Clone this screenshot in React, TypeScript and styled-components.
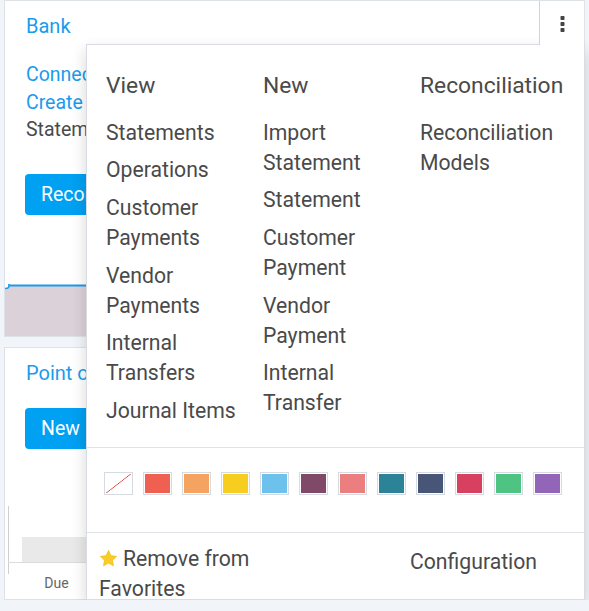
import React from "react";
import styled, { createGlobalStyle } from "styled-components";

const GlobalStyle = createGlobalStyle`
  html, body {
    margin: 0;
    padding: 0;
    background: #f1f4f8;
  }
  body {
    font-family: Roboto, "Liberation Sans", sans-serif;
  }
`;

const Page = styled.div`
  padding: 0 4px;
  display: flex;
  flex-direction: column;
  gap: 10px;
`;

const Card = styled.section<{ $h: number }>`
  position: relative;
  height: ${(p) => p.$h}px;
  box-sizing: border-box;
  background: #fff;
  border: 1px solid #dde2e7;
  display: flex;
  flex-direction: column;
`;

const CardHeader = styled.header`
  display: flex;
  justify-content: space-between;
  align-items: flex-start;
  height: 51px;
  padding-left: 21px;
`;

const Title = styled.h2`
  margin: 0;
  padding-top: 13px;
  font-size: 20px;
  font-weight: 400;
  line-height: 24px;
  color: #1a9bec;
  white-space: nowrap;
`;

const Toggle = styled.button`
  position: relative;
  z-index: 11;
  width: 45px;
  height: 44px;
  box-sizing: border-box;
  padding: 2px 0 0;
  border: 0;
  border-left: 1px solid #cfd4da;
  background: #fff;
  display: flex;
  align-items: center;
  justify-content: center;
`;

const CardBody = styled.div`
  padding: 9px 21px 0;
  display: flex;
  flex-direction: column;
  align-items: flex-start;
`;

const Link = styled.a<{ $muted?: boolean }>`
  font-size: 19.5px;
  line-height: 27.5px;
  white-space: nowrap;
  color: ${(p) => (p.$muted ? "#4a4a4a" : "#1a9bec")};
  text-decoration: none;
`;

const PrimaryButton = styled.button<{ $top: number }>`
  margin: ${(p) => p.$top}px 0 0 -1px;
  height: 41px;
  padding: 0 16px;
  border: 0;
  border-radius: 4px;
  background: #00a0f2;
  color: #fff;
  font-family: inherit;
  font-size: 19.5px;
  white-space: nowrap;
`;

const Chart = styled.svg`
  display: block;
  margin-top: auto;
`;

const Menu = styled.div`
  position: absolute;
  z-index: 10;
  top: 43px;
  left: 81px;
  right: -1px;
  height: 556px;
  box-sizing: border-box;
  background: #fff;
  border: 1px solid #d9dde3;
  box-shadow: 0 6px 14px rgba(0, 0, 0, 0.16);
  color: #4a4a4a;
  display: flex;
  flex-direction: column;
`;

const MenuColumns = styled.div`
  flex-shrink: 0;
  display: grid;
  grid-template-columns: repeat(3, 157px);
  padding: 24px 0 17px 19px;
`;

const Column = styled.div`
  padding-right: 20px;
  display: flex;
  flex-direction: column;
`;

const ColumnTitle = styled.div`
  font-size: 22.8px;
  line-height: 33px;
  margin-bottom: 12px;
  white-space: nowrap;
`;

const MenuItem = styled.a`
  font-size: 21.2px;
  line-height: 30px;
  padding: 3.8px 0;
  color: inherit;
  text-decoration: none;
`;

const Divider = styled.div`
  flex-shrink: 0;
  height: 1px;
  background: #dfe3e8;
`;

const Swatches = styled.div`
  flex-shrink: 0;
  display: flex;
  gap: 10px;
  padding: 24px 0 37px 17px;
`;

const Swatch = styled.span<{ $color: string }>`
  width: 29px;
  height: 23px;
  box-sizing: border-box;
  border: 1px solid #d6dbe1;
  padding: 1px;
  background-clip: content-box;
  background-color: ${(p) => (p.$color === "none" ? "#fff" : p.$color)};
  background-image: ${(p) =>
    p.$color === "none"
      ? "linear-gradient(to bottom right, transparent calc(50% - 0.7px), #e8403a 50%, transparent calc(50% + 0.7px))"
      : "none"};
`;

const Footer = styled.div`
  display: grid;
  grid-template-columns: 236px 1fr;
  font-size: 21.2px;
  line-height: 30px;
`;

const FooterLeft = styled.a`
  padding: 11px 0 0 12px;
  color: inherit;
  text-decoration: none;
`;

const FooterRight = styled.a`
  padding: 14px 0 0 87px;
  color: inherit;
  text-decoration: none;
`;

const Star = styled.svg`
  width: 19px;
  height: 19px;
  vertical-align: -2px;
  margin-right: 5px;
`;

const columns = [
  {
    title: "View",
    items: ["Statements", "Operations", "Customer Payments", "Vendor Payments", "Internal Transfers", "Journal Items"],
  },
  {
    title: "New",
    items: ["Import Statement", "Statement", "Customer Payment", "Vendor Payment", "Internal Transfer"],
  },
  {
    title: "Reconciliation",
    items: ["Reconciliation Models"],
  },
];

const colors = [
  "none",
  "#F06050",
  "#F4A460",
  "#F7CD1F",
  "#6CC1ED",
  "#814968",
  "#EB7E7F",
  "#2C8397",
  "#475577",
  "#D7405F",
  "#4FC381",
  "#9365B8",
];

const Dots = () => (
  <svg width="5" height="16" viewBox="0 0 5 16">
    <rect x="0.5" y="0" width="4" height="4" rx="0.8" fill="#444" />
    <rect x="0.5" y="6" width="4" height="4" rx="0.8" fill="#444" />
    <rect x="0.5" y="12" width="4" height="4" rx="0.8" fill="#444" />
  </svg>
);

export default function App() {
  return (
    <>
      <GlobalStyle />
      <Page>
        <Card $h={337}>
          <CardHeader>
            <Title>Bank</Title>
            <Toggle aria-label="More">
              <Dots />
            </Toggle>
          </CardHeader>
          <CardBody>
            <Link>Connect</Link>
            <Link>Create</Link>
            <Link $muted>Statements</Link>
            <PrimaryButton $top={30}>Reconcile</PrimaryButton>
          </CardBody>
          <Chart width="579" height="52" viewBox="0 0 579 52">
            <rect x="0" y="2" width="579" height="50" fill="#dbd2d9" />
            <line x1="0" y1="1.5" x2="579" y2="1.5" stroke="#1a9bec" strokeWidth="2" />
            <circle cx="1" cy="1.5" r="3" fill="#fff" stroke="#1a9bec" strokeWidth="1.5" />
          </Chart>
          <Menu>
            <MenuColumns>
              {columns.map((c) => (
                <Column key={c.title}>
                  <ColumnTitle>{c.title}</ColumnTitle>
                  {c.items.map((i) => (
                    <MenuItem key={i}>{i}</MenuItem>
                  ))}
                </Column>
              ))}
            </MenuColumns>
            <Divider />
            <Swatches>
              {colors.map((c) => (
                <Swatch key={c} $color={c} />
              ))}
            </Swatches>
            <Divider />
            <Footer>
              <FooterLeft>
                <Star viewBox="0 0 24 24">
                  <path
                    d="M12 1.8l3.1 6.6 7.1.9-5.2 4.9 1.3 7.1L12 17.8l-6.3 3.5 1.3-7.1-5.2-4.9 7.1-.9z"
                    fill="#f8cd2a"
                    stroke="#f0b400"
                    strokeWidth="0.8"
                    strokeLinejoin="round"
                  />
                </Star>
                Remove from Favorites
              </FooterLeft>
              <FooterRight>Configuration</FooterRight>
            </Footer>
          </Menu>
        </Card>
        <Card $h={253}>
          <CardHeader>
            <Title>Point of Sale</Title>
          </CardHeader>
          <CardBody>
            <PrimaryButton $top={0}>New Invoice</PrimaryButton>
          </CardBody>
          <Chart width="579" height="100" viewBox="0 0 579 100">
            <line x1="3.5" y1="7" x2="3.5" y2="75" stroke="#cfcfcf" strokeWidth="1" />
            <rect x="17" y="38" width="68" height="25" fill="#e9e9e9" />
            <line x1="3" y1="63.5" x2="579" y2="63.5" stroke="#dcdcdc" strokeWidth="1" />
            <text x="51.5" y="89" textAnchor="middle" fontSize="14" fill="#666" fontFamily="Roboto, sans-serif">
              Due
            </text>
          </Chart>
        </Card>
      </Page>
    </>
  );
}
